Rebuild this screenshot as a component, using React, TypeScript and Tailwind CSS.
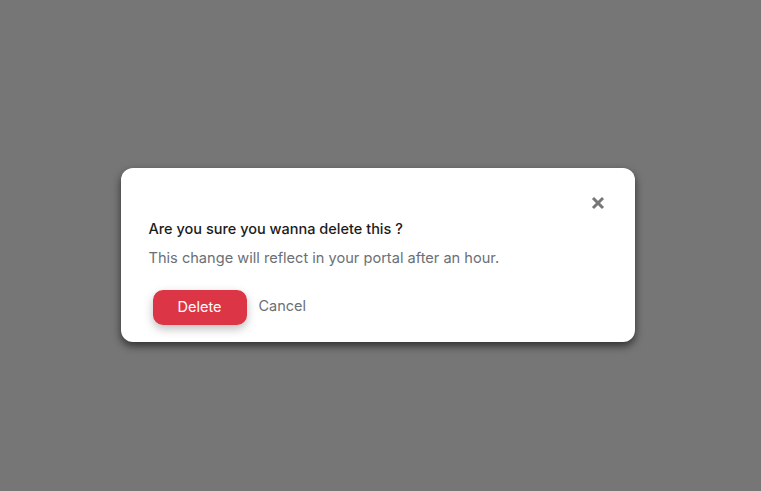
const CloseIcon = () => (
  <svg width="14" height="14" viewBox="0 0 14 14" fill="none">
    <path d="M2 2L12 12M12 2L2 12" stroke="currentColor" strokeWidth="3" strokeLinecap="butt" />
  </svg>
)

const App = () => {
  return (
    <div
      className="flex h-[491px] w-full items-center justify-center bg-[#767676]"
      style={{ fontFamily: "Inter, 'Noto Sans', sans-serif" }}
    >
      <div className="mr-[6px] mt-[18px] h-[174px] w-[514px] rounded-xl bg-white pb-[17px] pl-7 pr-[30px] pt-7 shadow-[0_4px_8px_rgba(0,0,0,0.6)]">
        <div className="flex h-[14px] justify-end">
          <button className="text-[#777777]">
            <CloseIcon />
          </button>
        </div>
        <h2 className="mt-[9px] text-[14.5px] font-medium leading-5 text-[#1b1b1b]">
          Are you sure you wanna delete this ?
        </h2>
        <p className="mt-[9px] text-[14.6px] leading-5 text-[#6b6f76]">
          This change will reflect in your portal after an hour.
        </p>
        <div className="mt-[22px] flex items-center gap-3">
          <button className="ml-1 h-[35px] w-[94px] rounded-[10px] bg-[#dc3545] text-[14.5px] text-white shadow-[0_4px_10px_rgba(0,0,0,0.25)]">
            Delete
          </button>
          <button className="-mt-[2px] text-[14.5px] text-[#6b6f76]">Cancel</button>
        </div>
      </div>
    </div>
  )
}

export default App
